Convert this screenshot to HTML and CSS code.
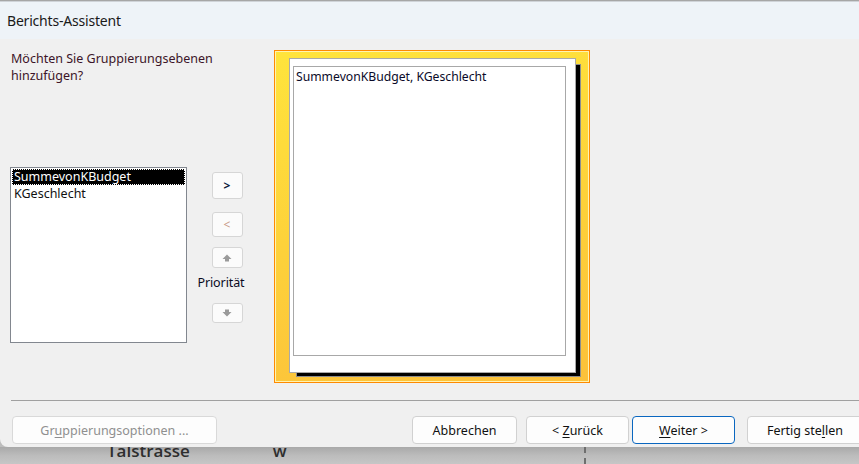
FILE: index.html
```html
<!DOCTYPE html>
<html lang="de">
<head>
<meta charset="utf-8">
<title>Berichts-Assistent</title>
<link rel="stylesheet" href="styles.css">
</head>
<body>
<div class="window">
  <div class="titlebar">Berichts-Assistent</div>
  <div class="body">
    <div class="main">
      <div class="left">
        <p class="question">Möchten Sie Gruppierungsebenen hinzufügen?</p>
        <div class="listbox">
          <div class="item selected">SummevonKBudget</div>
          <div class="item">KGeschlecht</div>
        </div>
      </div>
      <div class="mid">
        <button class="sbtn b-add">&gt;</button>
        <button class="sbtn b-rem">&lt;</button>
        <button class="sbtn b-up"><svg width="10" height="8" viewBox="0 0 10 8"><path d="M5 0.5 L9.5 5 H7 V7.5 H3 V5 H0.5 Z" fill="#9a9a9a"/></svg></button>
        <span class="prio">Priorität</span>
        <button class="sbtn b-down"><svg width="10" height="8" viewBox="0 0 10 8"><path d="M5 7.5 L9.5 3 H7 V0.5 H3 V3 H0.5 Z" fill="#9a9a9a"/></svg></button>
      </div>
      <div class="preview">
        <div class="page">
          <div class="inner">SummevonKBudget, KGeschlecht</div>
        </div>
      </div>
    </div>
    <div class="sep"></div>
    <div class="footer">
      <button class="btn opt" disabled>Gr<u>u</u>ppierungsoptionen ...</button>
      <button class="btn cancel">Abbrechen</button>
      <button class="btn back">&lt; <u>Z</u>urück</button>
      <button class="btn next"><u>W</u>eiter &gt;</button>
      <button class="btn finish">Fertig ste<u>l</u>len</button>
    </div>
  </div>
</div>
<div class="desk">
  <div class="desk-row">
    <span class="desk-a">Talstrasse</span>
    <span class="desk-b">w</span>
    <span class="desk-dash"></span>
  </div>
</div>
</body>
</html>
```
FILE: styles.css
```css
html, body {
  margin: 0;
  padding: 0;
  overflow: hidden;
  width: 859px;
  height: 464px;
  background: #bdbdbd;
}

body {
  font-family: "Noto Sans", "Open Sans", sans-serif;
  color: #000;
}

.window {
  width: 880px;
  height: 447px;
  background: #f0f0f0;
  border-top: 1px solid #a6a6a6;
  border-radius: 0 0 8px 8px;
  overflow: hidden;
  display: flex;
  flex-direction: column;
  box-sizing: border-box;
}

.titlebar {
  height: 38px;
  background: #eef3f8;
  border-top: 1px solid #cfd3d8;
  box-sizing: border-box;
  padding-left: 7px;
  font-size: 14px;
  letter-spacing: -0.2px;
  line-height: 37px;
  color: #1a1a1a;
}

.body {
  flex: 1;
  display: flex;
  flex-direction: column;
}

.main {
  display: flex;
  padding: 11px 0 0 10px;
  height: 361px;
  box-sizing: border-box;
}

.left {
  width: 177px;
  display: flex;
  flex-direction: column;
}

.question {
  margin: 0;
  padding-left: 1px;
  width: 240px;
  font-size: 12.5px;
  line-height: 17px;
  color: #3c1428;
  height: 117px;
}

.listbox {
  width: 177px;
  height: 176px;
  box-sizing: border-box;
  border: 1px solid #82878f;
  background: #fff;
  padding: 1px;
}

.item {
  height: 17px;
  font-size: 12.5px;
  line-height: 16px;
  padding-left: 2px;
  color: #111;
  box-sizing: border-box;
}

.item.selected {
  height: 16px;
  background: #000;
  color: #fff;
  outline: 1px dotted #fff;
  outline-offset: -1px;
  margin-bottom: 1px;
}

.mid {
  width: 80px;
  display: flex;
  flex-direction: column;
  align-items: center;
  padding-top: 122px;
  box-sizing: border-box;
}

.sbtn {
  width: 31px;
  margin: 0;
  padding: 0;
  background: #fbfbfb;
  border: 1px solid #d6d6d6;
  border-radius: 3px;
  font-family: "Noto Sans", sans-serif;
  font-size: 12px;
  display: flex;
  align-items: center;
  justify-content: center;
  box-sizing: border-box;
}

.b-add {
  height: 27px;
  font-weight: bold;
  color: #0b1a3a;
}

.b-rem {
  height: 25px;
  margin-top: 13px;
  color: #c89a86;
}

.b-up {
  height: 21px;
  margin-top: 10px;
}

.prio {
  font-size: 12.5px;
  line-height: 17px;
  margin-top: 6px;
  margin-right: 12px;
  letter-spacing: -0.1px;
  color: #0a0a1e;
}

.b-down {
  height: 20px;
  margin-top: 12px;
}

.preview {
  margin-left: 7px;
  width: 316px;
  height: 333px;
  box-sizing: border-box;
  border: 1px solid #ff8a00;
  box-shadow: inset 0 0 0 1px #fff3b0;
  background: linear-gradient(170deg, #ffe43c 0%, #fdd23a 50%, #fcc13a 100%);
  padding: 7px 13px 9px 14px;
}

.page {
  width: 287px;
  height: 315px;
  box-sizing: border-box;
  background: #fff;
  border: 1px solid #a9a9a9;
  box-shadow: 6px 5px 0 -2px #000, 6px 5px 0 -1px #8d8d8d;
  padding: 7px 9px 16px 3px;
}

.inner {
  height: 100%;
  box-sizing: border-box;
  border: 1px solid #a8a8a8;
  font-size: 12.2px;
  line-height: 17px;
  padding: 1px 2px;
  color: #0a0a28;
}

.sep {
  margin: 0 0 0 11px;
  height: 1px;
  background: #a0a0a0;
}

.footer {
  display: flex;
  padding: 15px 0 0 12px;
}

.btn {
  height: 28px;
  margin: 0;
  padding: 0;
  background: #fdfdfd;
  border: 1px solid #d1d1d1;
  border-radius: 4px;
  font-family: "Noto Sans", sans-serif;
  font-size: 12.5px;
  color: #111;
  box-sizing: border-box;
  flex: none;
}

.btn u {
  text-underline-offset: 2px;
}

.opt {
  width: 205px;
  color: #8f8f8f;
  border-color: #d9d9d9;
}

.cancel {
  width: 105px;
  margin-left: 195px;
}

.back {
  width: 103px;
  margin-left: 9px;
}

.next {
  width: 103px;
  margin-left: 3px;
  border-color: #0a67c0;
}

.finish {
  width: 116px;
  margin-left: 12px;
}

.desk {
  height: 17px;
  overflow: hidden;
  background: linear-gradient(180deg, #a9a9a9 0%, #bcbcbc 50%, #c6c6c6 100%);
}

.desk-row {
  display: flex;
  align-items: flex-start;
  height: 17px;
}

.desk-a,
.desk-b {
  font-family: "Open Sans", sans-serif;
  font-weight: 600;
  font-size: 17px;
  line-height: 8px;
  color: #2e2e2e;
}

.desk-a {
  margin-left: 107px;
}

.desk-b {
  margin-left: 83px;
}

.desk-dash {
  margin-left: 297px;
  width: 0;
  height: 17px;
  border-left: 2px dashed #6e6e6e;
}
```
